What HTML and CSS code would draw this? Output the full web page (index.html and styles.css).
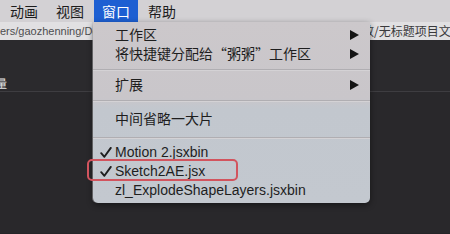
FILE: index.html
```html
<!DOCTYPE html>
<html lang="zh">
<head>
<meta charset="utf-8">
<title>窗口菜单</title>
<link rel="stylesheet" href="styles.css">
</head>
<body>
  <div class="menubar">
    <span class="menubar-item">动画</span>
    <span class="menubar-item">视图</span>
    <span class="menubar-item active">窗口</span>
    <span class="menubar-item">帮助</span>
  </div>
  <div class="workspace">
    <div class="pathbar">
      <span class="path-left">ers/gaozhenning/Do</span>
      <span class="path-gap"></span>
      <span class="path-right"><span class="path-right-text">放/无标题项目文件</span></span>
    </div>
    <div class="panel-head"><span class="panel-label">量</span></div>
    <div class="panel-body"></div>
  </div>

  <div class="dropdown">
    <div class="row">
      <span class="check"></span>
      <span class="label cjk">工作区</span>
      <svg class="arrow" width="9" height="10" viewBox="0 0 9 10"><polygon points="0,0 9,5 0,10"/></svg>
    </div>
    <div class="row">
      <span class="check"></span>
      <span class="label cjk">将快捷键分配给“粥粥”工作区</span>
      <svg class="arrow" width="9" height="10" viewBox="0 0 9 10"><polygon points="0,0 9,5 0,10"/></svg>
    </div>
    <div class="sep"></div>
    <div class="row">
      <span class="check"></span>
      <span class="label cjk">扩展</span>
      <svg class="arrow" width="9" height="10" viewBox="0 0 9 10"><polygon points="0,0 9,5 0,10"/></svg>
    </div>
    <div class="sep"></div>
    <div class="row row-tall">
      <span class="check"></span>
      <span class="label cjk">中间省略一大片</span>
    </div>
    <div class="sep"></div>
    <div class="row">
      <span class="check"><svg width="12" height="11" viewBox="0 0 12 11"><path d="M1.2 6.2 L4.4 9.8 L10.8 0.9"/></svg></span>
      <span class="label">Motion 2.jsxbin</span>
    </div>
    <div class="row row-marked">
      <span class="check"><svg width="12" height="11" viewBox="0 0 12 11"><path d="M1.2 6.2 L4.4 9.8 L10.8 0.9"/></svg></span>
      <span class="label">Sketch2AE.jsx</span>
      <span class="mark"></span>
    </div>
    <div class="row">
      <span class="check"></span>
      <span class="label">zl_ExplodeShapeLayers.jsxbin</span>
    </div>
  </div>
</body>
</html>
```

FILE: styles.css
```css
html, body {
  margin: 0;
  padding: 0;
}
body {
  width: 450px;
  height: 234px;
  overflow: hidden;
  background: #252427;
  font-family: "Liberation Sans", "Noto Sans CJK SC", sans-serif;
  position: relative;
}

.menubar {
  height: 22px;
  display: flex;
  gap: 2px;
  padding-left: 2px;
  background: #d3d1d4;
  font-family: "Noto Sans CJK SC", sans-serif;
  font-size: 14px;
  line-height: 22px;
  color: #1c1c1c;
}
.menubar-item {
  padding: 0 8px;
}
.menubar-item.active {
  background: #1d5fd2;
  color: #ffffff;
}

.workspace {
  display: flex;
  flex-direction: column;
}
.pathbar {
  height: 18px;
  display: grid;
  grid-template-columns: 93px 277px 1fr;
  background: #e1e0e2;
  color: #4e4e50;
  line-height: 18px;
  white-space: nowrap;
}
.path-left {
  font-size: 11px;
  overflow: hidden;
}
.path-right {
  overflow: hidden;
  font-family: "Noto Sans CJK SC", sans-serif;
  font-size: 12px;
  color: #3a3a3c;
}
.path-right-text {
  display: inline-block;
  margin-left: -8px;
}
.panel-head {
  height: 52px;
  box-sizing: border-box;
  padding-top: 34px;
  background: #2b2a2d;
  border-bottom: 1px solid #3e3d41;
}
.panel-label {
  display: inline-block;
  margin-left: -4px;
  font-family: "Noto Sans CJK SC", sans-serif;
  font-size: 11px;
  line-height: 12px;
  color: #e8e8e8;
}
.panel-body {
  height: 141px;
  background: #29282b;
}

.dropdown {
  position: absolute;
  left: 93px;
  top: 22px;
  width: 277px;
  box-sizing: border-box;
  padding: 3px 0;
  background: linear-gradient(to bottom, #ccc8cb 0%, #c9c6ca 42%, #c2c7ce 48%, #c3c8cf 100%);
  border-radius: 0 0 5px 5px;
  box-shadow: 0 2px 6px rgba(0, 0, 0, 0.45), -1px 0 0 rgba(200, 200, 204, 0.5);
  color: #1e1e1e;
  font-size: 14px;
}
.row {
  position: relative;
  height: 19px;
  display: flex;
  align-items: center;
  padding: 0 11px 0 7px;
  white-space: nowrap;
}
.row-tall {
  height: 25px;
}
.check {
  width: 15px;
  flex: none;
  display: flex;
  align-items: center;
}
.check svg path {
  fill: none;
  stroke: #1e1e1e;
  stroke-width: 1.9;
  stroke-linecap: round;
  stroke-linejoin: round;
}
.label {
  flex: 1;
  line-height: 19px;
}
.cjk {
  font-family: "Noto Sans CJK SC", sans-serif;
}
.arrow {
  flex: none;
  fill: #141414;
}
.sep {
  height: 1px;
  margin: 6px 0 5px;
  background: #b0aeb2;
  box-shadow: 0 1px 0 #d4d2d5;
}
.mark {
  position: absolute;
  left: -6px;
  top: -3px;
  width: 151px;
  height: 22px;
  box-sizing: border-box;
  border: 2px solid #d2545e;
  border-radius: 5px;
}
```
